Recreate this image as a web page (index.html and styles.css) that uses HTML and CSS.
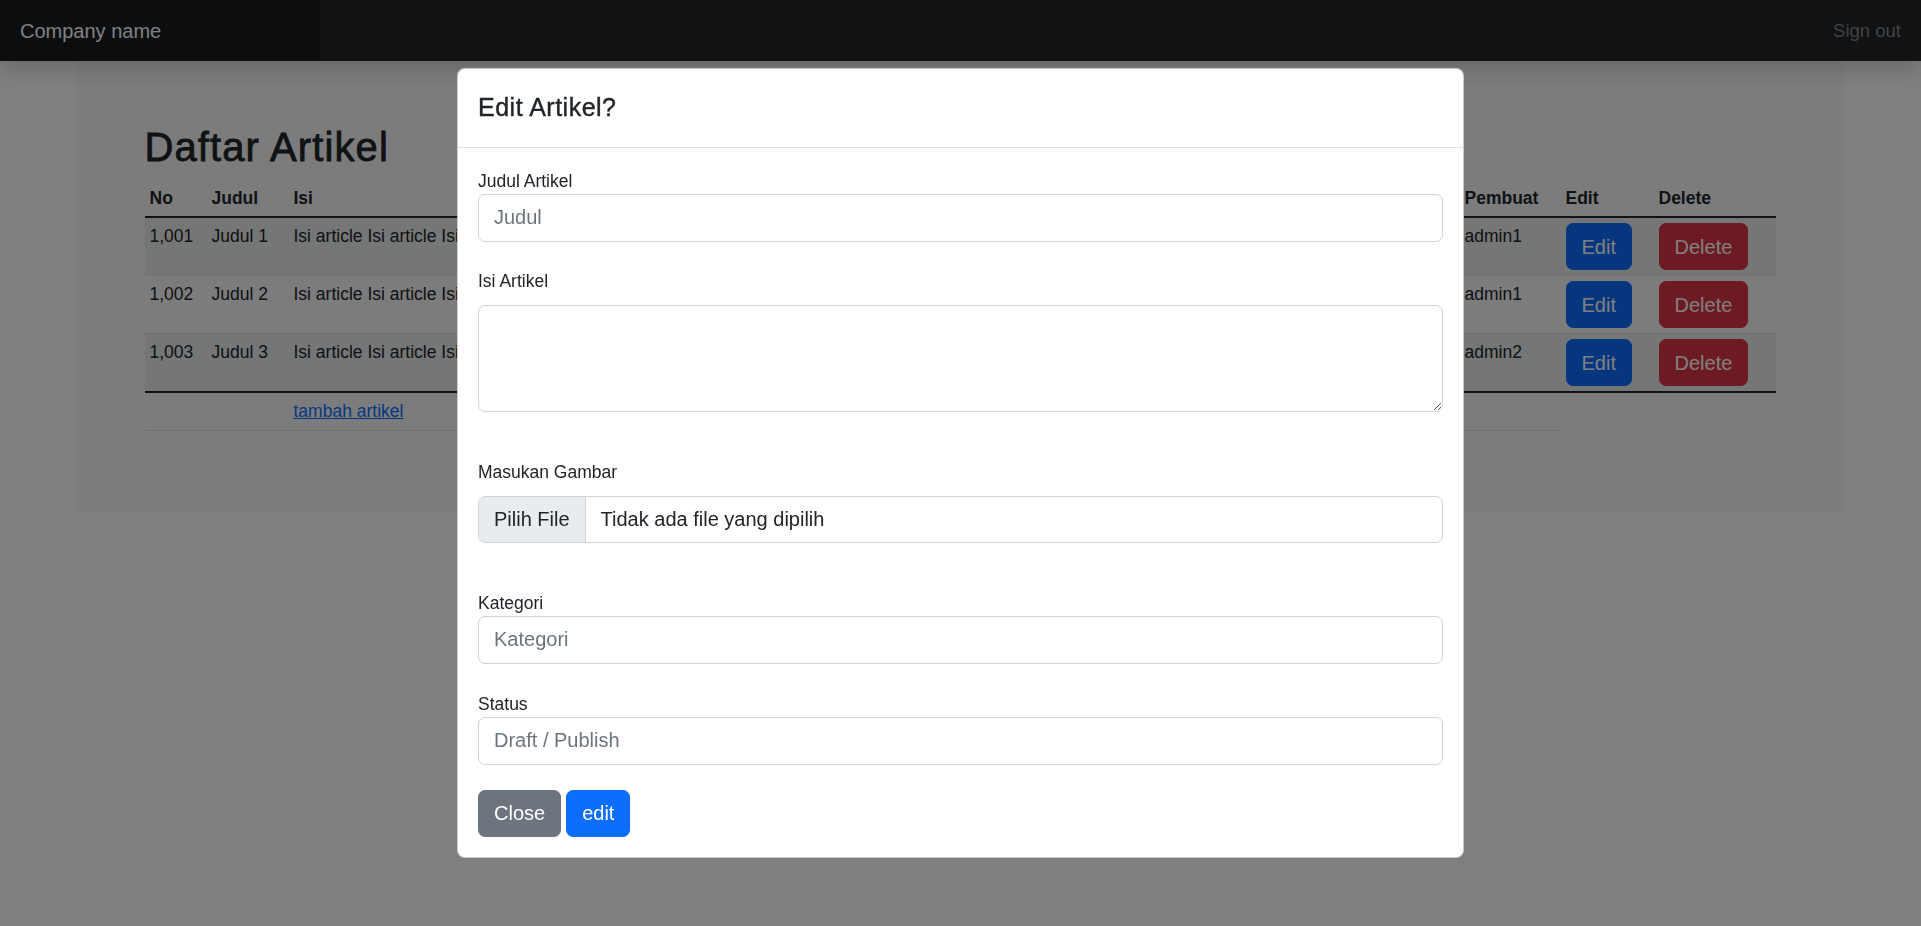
FILE: index.html
```html
<!DOCTYPE html>
<html lang="id">
<head>
<meta charset="utf-8">
<title>Daftar Artikel</title>
<link rel="stylesheet" href="styles.css">
</head>
<body>
<header class="navbar">
  <a class="brand" href="#">Company name</a>
  <a class="signout" href="#">Sign out</a>
</header>

<main class="page">
  <h2 class="page-title">Daftar Artikel</h2>
  <table class="tbl">
    <colgroup>
      <col class="c-no"><col class="c-judul"><col class="c-isi"><col class="c-gambar"><col class="c-kat"><col class="c-status"><col class="c-pembuat"><col class="c-edit"><col class="c-del">
    </colgroup>
    <thead>
      <tr><th>No</th><th>Judul</th><th>Isi</th><th>Gambar</th><th>Kategori</th><th>Status</th><th>Pembuat</th><th>Edit</th><th>Delete</th></tr>
    </thead>
    <tbody class="rows">
      <tr><td>1,001</td><td>Judul 1</td><td class="clip">Isi article Isi article Isi article Isi article Isi article Isi article</td><td>gambar1.jpg</td><td>Berita</td><td>Publish</td><td>admin1</td><td><a class="btn btn-primary" href="#">Edit</a></td><td><a class="btn btn-danger" href="#">Delete</a></td></tr>
      <tr><td>1,002</td><td>Judul 2</td><td class="clip">Isi article Isi article Isi article Isi article Isi article Isi article</td><td>gambar2.jpg</td><td>Berita</td><td>Draft</td><td>admin1</td><td><a class="btn btn-primary" href="#">Edit</a></td><td><a class="btn btn-danger" href="#">Delete</a></td></tr>
      <tr><td>1,003</td><td>Judul 3</td><td class="clip">Isi article Isi article Isi article Isi article Isi article Isi article</td><td>gambar3.jpg</td><td>Opini</td><td>Publish</td><td>admin2</td><td><a class="btn btn-primary" href="#">Edit</a></td><td><a class="btn btn-danger" href="#">Delete</a></td></tr>
    </tbody>
    <tbody class="foot">
      <tr><td></td><td></td><td><a class="add-link" href="#">tambah artikel</a></td><td></td><td></td><td></td><td></td></tr>
    </tbody>
  </table>
</main>

<div class="backdrop"></div>

<div class="modal">
  <div class="modal-content">
    <div class="modal-header">
      <h5 class="modal-title">Edit Artikel?</h5>
    </div>
    <form class="modal-body">
      <label class="lbl">Judul Artikel</label>
      <input class="field" type="text" placeholder="Judul">

      <label class="lbl lbl-spaced gap-sm">Isi Artikel</label>
      <textarea class="field area"></textarea>

      <label class="lbl lbl-spaced gap-lg">Masukan Gambar</label>
      <div class="file">
        <span class="file-btn">Pilih File</span>
        <span class="file-name">Tidak ada file yang dipilih</span>
      </div>

      <label class="lbl gap-lg">Kategori</label>
      <input class="field" type="text" placeholder="Kategori">

      <label class="lbl gap-md">Status</label>
      <input class="field" type="text" placeholder="Draft / Publish">

      <div class="actions">
        <button type="button" class="btn btn-secondary">Close</button>
        <button type="button" class="btn btn-primary">edit</button>
      </div>
    </form>
  </div>
</div>
</body>
</html>
```

FILE: styles.css
```css
* { box-sizing: border-box; }

html, body { margin: 0; padding: 0; }

body {
  font-family: "Liberation Sans", Arial, sans-serif;
  font-size: 20px;
  line-height: 1.5;
  color: #212529;
  background: #fff;
  height: 926px;
  overflow: hidden;
}

/* ---------- navbar ---------- */
.navbar {
  position: sticky;
  top: 0;
  z-index: 10;
  display: flex;
  justify-content: space-between;
  align-items: stretch;
  height: 61px;
  background: #212529;
  box-shadow: 0 10px 20px rgba(0, 0, 0, .15);
}
.brand {
  width: 320px;
  display: flex;
  align-items: center;
  padding: 0 20px;
  color: #fff;
  text-decoration: none;
  font-size: 20px;
  background: rgba(0, 0, 0, .25);
  box-shadow: inset -1px 0 0 rgba(0, 0, 0, .25);
}
.signout {
  display: flex;
  align-items: center;
  padding: 0 20px;
  font-size: 18.5px;
  color: rgba(255, 255, 255, .45);
  text-decoration: none;
}

/* ---------- page ---------- */
.page {
  width: 1768px;
  margin: 0 auto;
  background: #f8f9fa;
  padding: 62px 69px 81px 68px;
}
.page-title {
  margin: 0 0 9px;
  font-size: 40px;
  line-height: 48px;
  font-weight: 400;
  letter-spacing: 1.1px;
  -webkit-text-stroke: .8px #212529;
}

.tbl {
  width: 1631px;
  table-layout: fixed;
  border-collapse: collapse;
  color: #212529;
  font-size: 17.5px;
  line-height: 26.25px;
}
.c-no { width: 62px; }
.c-judul { width: 82px; }
.c-isi { width: 600px; }
.c-gambar { width: 200px; }
.c-kat { width: 200px; }
.c-status { width: 171px; }
.c-pembuat { width: 101px; }
.c-edit { width: 93px; }
.c-del { width: 122px; }

.tbl th,
.tbl td {
  padding: 5px;
  text-align: left;
  vertical-align: top;
  border-bottom: 1px solid #dee2e6;
}
.tbl th {
  font-weight: 700;
  vertical-align: bottom;
}
.tbl .clip {
  white-space: nowrap;
  overflow: hidden;
}
.rows { border-top: 2px solid #212529; }
.rows tr:nth-child(odd) td { background: rgba(0, 0, 0, .05); }
.foot { border-top: 2px solid #212529; }
.add-link { color: #0d6efd; }

/* ---------- buttons ---------- */
.btn {
  display: inline-block;
  vertical-align: top;
  padding: 7.5px 15px;
  font-family: inherit;
  font-size: 20px;
  line-height: 30px;
  color: #fff;
  text-decoration: none;
  border: 1px solid transparent;
  border-radius: 7px;
  cursor: pointer;
}
.btn-primary { background: #0d6efd; border-color: #0d6efd; }
.btn-danger { background: #dc3545; border-color: #dc3545; }
.btn-secondary { background: #6c757d; border-color: #6c757d; }

/* ---------- modal ---------- */
.backdrop {
  position: fixed;
  inset: 0;
  z-index: 50;
  background: rgba(0, 0, 0, .5);
}
.modal {
  position: fixed;
  inset: 0;
  z-index: 60;
  display: flex;
  flex-direction: column;
  align-items: center;
}
.modal-content {
  width: 1007px;
  margin-top: 68px;
  background: #fff;
  border: 1px solid rgba(0, 0, 0, .2);
  border-radius: 8px;
}
.modal-header {
  padding: 20px;
  border-bottom: 1px solid #dee2e6;
}
.modal-title {
  margin: 0;
  font-size: 25px;
  line-height: 37.5px;
  font-weight: 400;
  letter-spacing: .5px;
  -webkit-text-stroke: .4px #212529;
}
.modal-body {
  display: flex;
  flex-direction: column;
  padding: 20px;
  margin: 0;
}
.lbl {
  display: block;
  font-size: 17.5px;
  line-height: 26.5px;
}
.lbl-spaced { margin-bottom: 10px; }
.gap-sm { margin-top: 26.5px; }
.gap-md { margin-top: 27px; }
.gap-lg { margin-top: 47px; }

.field {
  display: block;
  width: 100%;
  height: 47.5px;
  padding: 7.5px 15px;
  font-family: inherit;
  font-size: 20px;
  line-height: 30px;
  color: #212529;
  background: #fff;
  border: 1px solid #ced4da;
  border-radius: 7px;
  outline: none;
}
.field::placeholder { color: #6c757d; opacity: 1; }
.area {
  height: 107.5px;
  resize: vertical;
}

.file {
  display: flex;
  height: 47px;
  border: 1px solid #ced4da;
  border-radius: 7px;
  overflow: hidden;
}
.file-btn {
  padding: 7.5px 15px;
  background: #e9ecef;
  border-right: 1px solid #ced4da;
  line-height: 30px;
}
.file-name {
  padding: 7.5px 15px;
  line-height: 30px;
}

.actions {
  display: flex;
  gap: 5px;
  margin-top: 25px;
}
```
